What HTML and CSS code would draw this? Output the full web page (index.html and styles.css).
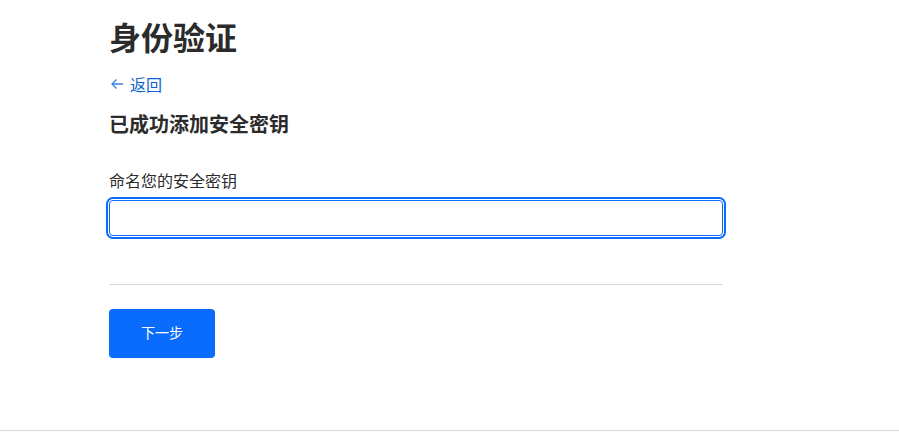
FILE: index.html
```html
<!DOCTYPE html>
<html lang="zh-CN">
<head>
    <meta charset="UTF-8">
    <meta name="viewport" content="width=device-width, initial-scale=1.0">
    <title>身份验证</title>
    <link rel="stylesheet" href="styles.css">
</head>
<body>
    <main class="page">
        <h1 class="title">身份验证</h1>
        <a class="back" href="#">
            <svg class="back-icon" width="14" height="14" viewBox="0 0 14 14" aria-hidden="true">
                <path d="M13 7H2M6.5 2.5L2 7l4.5 4.5" fill="none" stroke="currentColor" stroke-width="1.3"/>
            </svg>
            <span>返回</span>
        </a>
        <h2 class="subtitle">已成功添加安全密钥</h2>

        <form class="key-form">
            <label class="label" for="keyName">命名您的安全密钥</label>
            <input class="field" type="text" id="keyName" autofocus>
            <hr class="divider">
            <button type="submit" class="next">下一步</button>
        </form>
    </main>
    <footer class="footer"></footer>
</body>
</html>
```

FILE: styles.css
```css
body {
    margin: 0;
    font-family: "Noto Sans CJK SC", "Noto Sans", sans-serif;
    color: #2b2b2b;
    background-color: #fff;
}
.page {
    width: 614px;
    margin-left: 109px;
    padding-top: 14px;
    height: 416px;
    box-sizing: border-box;
}
.title {
    margin: 0;
    font-size: 32px;
    line-height: 44px;
    font-weight: 700;
}
.back {
    display: inline-flex;
    align-items: center;
    gap: 6px;
    margin-top: 14px;
    font-size: 16px;
    line-height: 24px;
    color: #0a63d1;
    text-decoration: none;
}
.back-icon {
    margin-left: 1px;
    color: #3b82e6;
}
.subtitle {
    margin: 14px 0 0;
    font-size: 20px;
    line-height: 28px;
    font-weight: 700;
}
.key-form {
    margin-top: 30px;
}
.label {
    display: block;
    font-size: 16px;
    line-height: 24px;
    margin-bottom: 8px;
}
.field {
    display: block;
    width: 100%;
    height: 36px;
    box-sizing: border-box;
    border: 1px solid #0a6cff;
    border-radius: 4px;
    outline: none;
    box-shadow: 0 0 0 1px #fff, 0 0 0 3px #0a6cff;
    font-size: 16px;
    padding: 0 10px;
}
.divider {
    border: none;
    border-top: 1px solid #d9d9d9;
    margin: 48px 0 24px;
}
.next {
    width: 106px;
    height: 49px;
    padding: 0 0 3px;
    background-color: #0a6cff;
    color: #fff;
    border: none;
    border-radius: 4px;
    font-family: inherit;
    font-size: 14px;
    cursor: pointer;
}
.footer {
    border-top: 1px solid #d6d6d6;
    margin-top: 14px;
}
```
